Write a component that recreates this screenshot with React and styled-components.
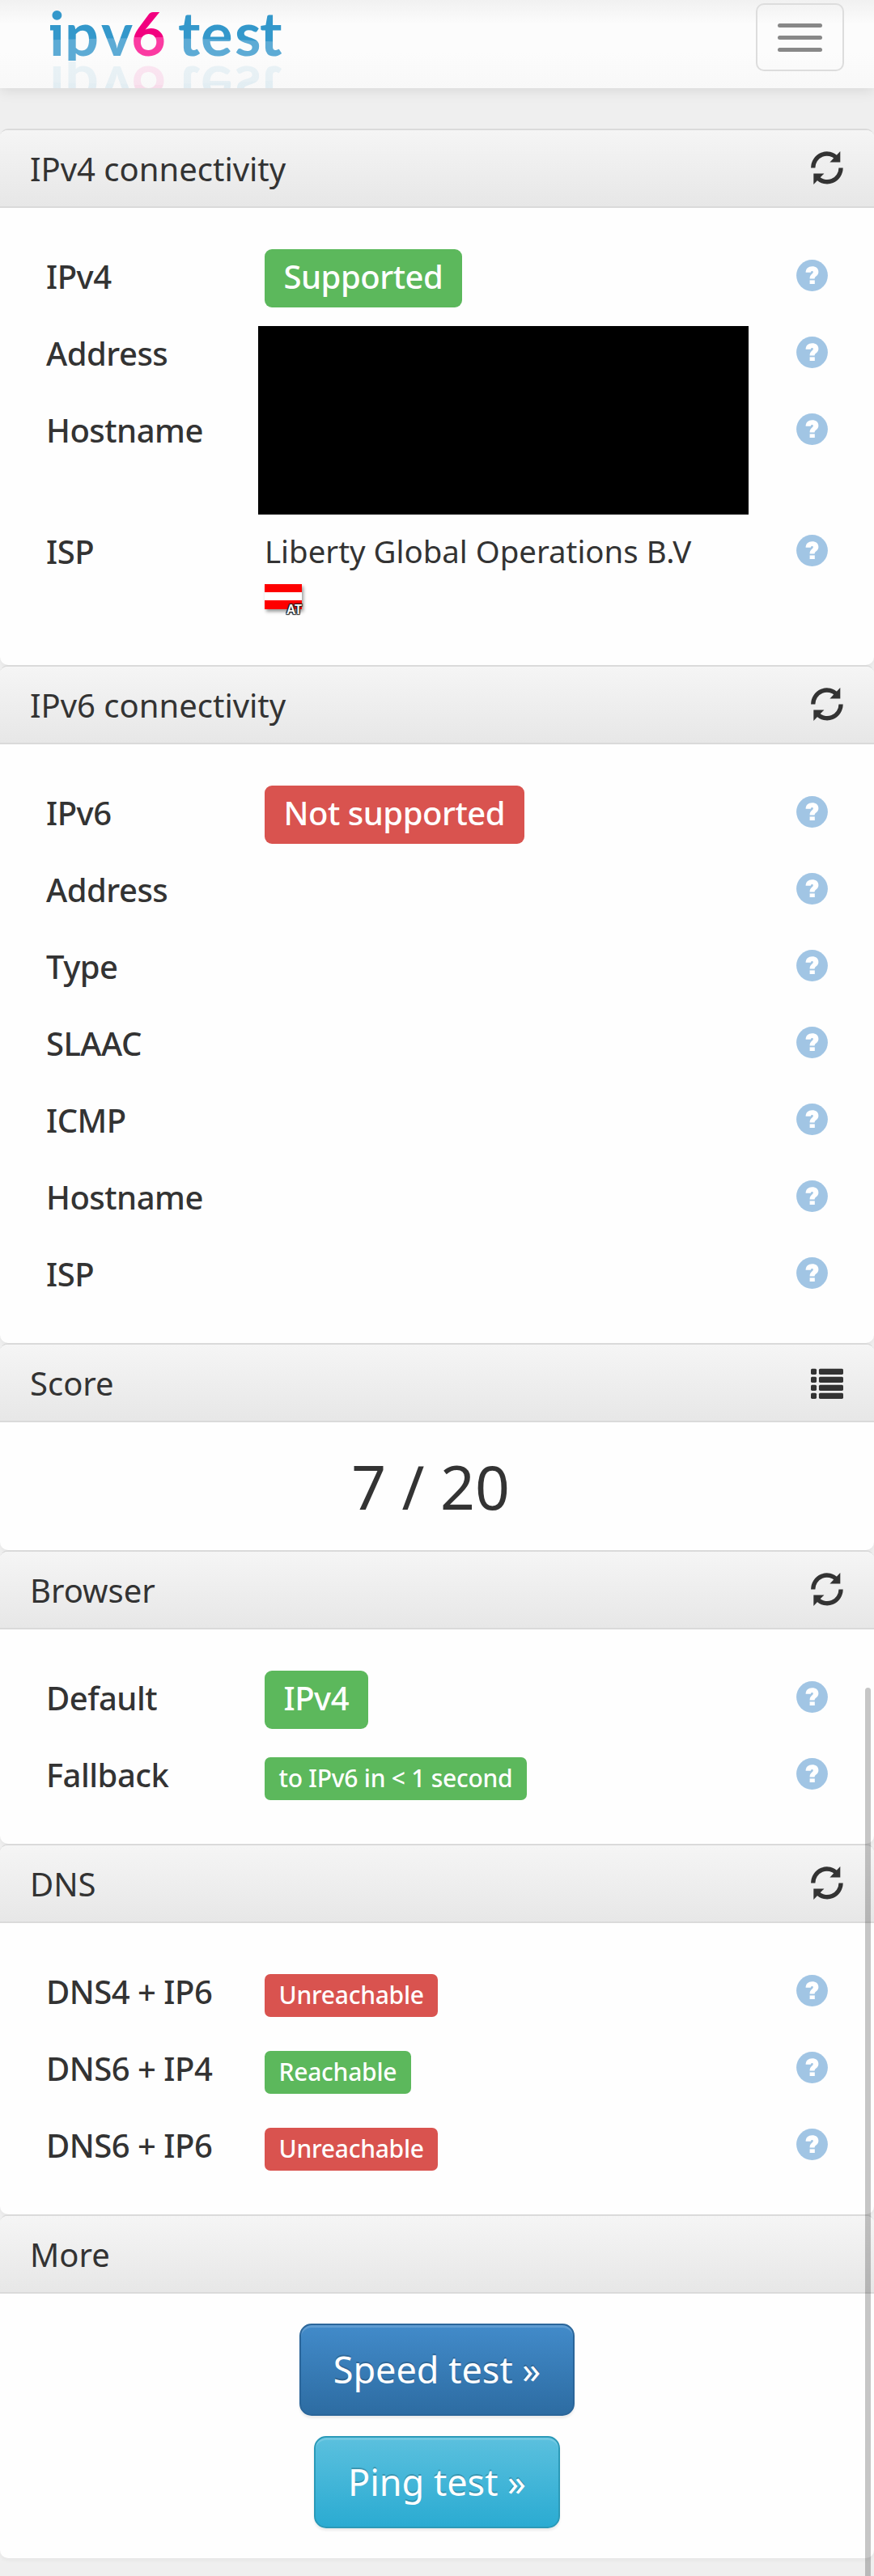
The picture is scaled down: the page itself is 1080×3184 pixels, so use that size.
import React from "react";
import styled, { createGlobalStyle } from "styled-components";

const GlobalStyle = createGlobalStyle`
  * { box-sizing: border-box; }
  body {
    margin: 0;
    background: #efefef;
    color: #333;
    font-family: "Noto Sans", "Open Sans", sans-serif;
    font-size: 40px;
    line-height: 57px;
  }
`;

const Page = styled.div`
  position: relative;
  width: 1080px;
  height: 3184px;
  overflow: hidden;
`;

const Navbar = styled.header`
  display: flex;
  justify-content: space-between;
  align-items: flex-start;
  height: 109px;
  margin-bottom: 50px;
  padding: 0 37px 0 60px;
  background: linear-gradient(#f1f1f1, #fcfcfc 30px, #fcfcfc 65px, #f8f8f8);
  box-shadow: 0 3px 16px rgba(0, 0, 0, 0.1);
  overflow: hidden;
`;

const Logo = styled.svg`
  display: block;
  overflow: visible;
  -webkit-box-reflect: below -67px linear-gradient(rgba(0, 0, 0, 0.11), rgba(0, 0, 0, 0.11));
`;

const LogoText = styled.text`
  font-family: Lato, sans-serif;
  font-weight: 700;
  font-size: 74px;
`;

const MenuButton = styled.button`
  display: flex;
  flex-direction: column;
  align-items: center;
  justify-content: center;
  gap: 10px;
  width: 109px;
  height: 84px;
  margin: 4px 0 0;
  padding: 0;
  border: 2px solid #ddd;
  border-radius: 10px;
  background: transparent;
`;

const MenuBar = styled.span`
  width: 55px;
  height: 5px;
  border-radius: 3px;
  background: #888;
`;

const Panel = styled.section`
  border-top: 2px solid #dadada;
  border-radius: 10px;
  background: #fefefe;
  box-shadow: 0 3px 5px rgba(0, 0, 0, 0.04);
  overflow: hidden;
`;

const PanelHeading = styled.h2`
  display: flex;
  justify-content: space-between;
  align-items: flex-start;
  height: 96px;
  margin: 0;
  padding: 19px 38px 0 37px;
  border-bottom: 2px solid #dadada;
  background: linear-gradient(#f5f5f5, #e7e7e7);
  font-size: 40px;
  font-weight: 400;
  line-height: 57px;
`;

const HeadingIcon = styled.svg`
  display: block;
  width: 40px;
  height: 41px;
  margin-top: 7px;
  fill: #333;
`;

const Rows = styled.div`
  padding: 36px 0 39px;
`;

const Masked = styled.div`
  position: relative;
`;

const Redaction = styled.div`
  position: absolute;
  left: 319px;
  top: 15px;
  width: 606px;
  height: 233px;
  background: #000;
`;

const Row = styled.div`
  display: grid;
  grid-template-columns: 270px 1fr 39px;
  align-items: start;
  height: ${(p) => (p.$tall ? 150 : 95)}px;
  padding: 0 57px 0 57px;
`;

const Label = styled.div`
  padding-top: 20px;
  font-weight: 500;
  letter-spacing: -0.5px;
  white-space: nowrap;
`;

const Value = styled.div`
  padding-top: ${(p) => p.$top}px;
  font-size: 38.4px;
  white-space: nowrap;
`;

const HelpIcon = styled.svg`
  display: block;
  width: 39px;
  height: 39px;
  margin-top: 28px;
`;

const Badge = styled.span`
  display: block;
  width: max-content;
  height: ${(p) => (p.$small ? 53 : 72)}px;
  padding: 0 ${(p) => (p.$small ? 17.5 : 23.5)}px;
  border-radius: ${(p) => (p.$small ? 7 : 9)}px;
  background: ${(p) => (p.$tone === "good" ? "#5cb85c" : "#d9534f")};
  color: #fff;
  font-size: ${(p) => (p.$small ? 30 : 40)}px;
  font-weight: 500;
  letter-spacing: ${(p) => (p.$small ? -0.25 : -0.48)}px;
  line-height: ${(p) => (p.$small ? 51 : 67)}px;
`;

const Flag = styled.div`
  display: flex;
  justify-content: flex-end;
  align-items: flex-end;
  width: 46px;
  height: 31px;
  margin-top: 12px;
  background: linear-gradient(#fe0000 10.5px, #fff 10.5px, #fff 20.5px, #fe0000 20.5px);
  box-shadow: 2px 3px 4px rgba(0, 0, 0, 0.4);
`;

const FlagCode = styled.span`
  margin: 0 0 -10px;
  color: #fff;
  font-size: 16px;
  font-weight: 600;
  line-height: 20px;
  text-shadow: -1px -1px 1px #222, 1px -1px 1px #222, -1px 1px 1px #222, 1px 1px 1px #222, 0 0 2px #222;
`;

const Score = styled.div`
  height: 158px;
  padding: 28px 16px 0 0;
  font-size: 75px;
  line-height: 102px;
  text-align: center;
`;

const Actions = styled.div`
  display: flex;
  flex-direction: column;
  align-items: center;
  gap: 25px;
  padding: 37px 0;
`;

const ActionButton = styled.button`
  height: 114px;
  padding: 0 40px;
  border: 2px solid ${(p) => (p.$primary ? "#2b669a" : "#2b9ab8")};
  border-radius: 15px;
  background: ${(p) =>
    p.$primary ? "linear-gradient(#428bca, #2d6ca2)" : "linear-gradient(#5bc0de, #2aabd2)"};
  box-shadow: inset 0 3px 0 rgba(255, 255, 255, 0.15), 0 3px 3px rgba(0, 0, 0, 0.075);
  color: #fff;
  font-family: inherit;
  font-size: 45px;
  line-height: 110px;
  text-shadow: 0 -2px 0 rgba(0, 0, 0, 0.2);
`;

const ScrollThumb = styled.div`
  position: absolute;
  top: 2086px;
  right: 4px;
  bottom: -10px;
  width: 7px;
  border-radius: 4px;
  background: rgba(0, 0, 0, 0.22);
`;

function SiteLogo() {
  return (
    <Logo width="300" height="109" viewBox="60 0 300 109" role="img" aria-label="ipv6 test">
      <defs>
        {/* Both fills stop at y = 75, which trims the descender of the "p". */}
        <pattern id="blue" patternUnits="userSpaceOnUse" width="400" height="200">
          <rect width="400" height="75" fill="#3498cb" />
          <path d="M0 52 Q200 41 400 55 V75 H0 Z" fill="#5dabd5" />
        </pattern>
        <pattern id="pink" patternUnits="userSpaceOnUse" width="400" height="200">
          <rect width="400" height="75" fill="#f2007f" />
          <path d="M0 46 H400 V75 H0 Z" fill="#fb3ba2" />
        </pattern>
      </defs>
      <rect x="62" y="31" width="8" height="6.5" fill="#3498cb" />
      <LogoText x="61 80 125 162" y="69" fill="url(#blue)">
        ipv<tspan fill="url(#pink)">6</tspan>
      </LogoText>
      <LogoText x="220 248 290 321" y="69" fill="url(#blue)">
        test
      </LogoText>
    </Logo>
  );
}

function RefreshIcon() {
  return (
    <HeadingIcon viewBox="0 0 41 41" preserveAspectRatio="none">
      <path d="M2.8 20.5 A17.4 17.4 0 0 1 33 8.6" fill="none" stroke="#333" strokeWidth="5.4" />
      <path d="M37.2 0 V13.6 H24 Z" />
      <path d="M38 20.5 A17.4 17.4 0 0 1 8 32.4" fill="none" stroke="#333" strokeWidth="5.4" />
      <path d="M3.4 41 V27.4 H16.8 Z" />
    </HeadingIcon>
  );
}

function ListIcon() {
  return (
    <HeadingIcon viewBox="0 0 41 41" preserveAspectRatio="none">
      {[3.7, 13.7, 23.7, 33.7].map((y) => (
        <g key={y}>
          <rect x="0" y={y} width="7.2" height="7.2" rx="1.6" />
          <rect x="10.2" y={y} width="30.8" height="7.2" rx="1.6" />
        </g>
      ))}
    </HeadingIcon>
  );
}

function Help() {
  return (
    <HelpIcon viewBox="0 0 39 39">
      <circle cx="19.5" cy="19.5" r="19.4" fill="#a1c5e4" />
      <path
        d="M11.6 15.8 C11.6 11 14.8 8.2 19.6 8.2 C24.4 8.2 27.4 10.8 27.4 15 C27.4 20.4 22.6 20 22.6 23.6 H16.6 C16.4 18 20.8 17.8 20.8 15.2 C20.8 13.6 18 13.6 17.8 15.8 Z"
        fill="#fff"
      />
      <rect x="16.6" y="25.4" width="6.2" height="4.6" fill="#fff" />
    </HelpIcon>
  );
}

function Heading({ title, icon }) {
  return (
    <PanelHeading>
      {title}
      {icon}
    </PanelHeading>
  );
}

function Field({ label, badge, tone, small, tall, children }) {
  return (
    <Row $tall={tall}>
      <Label>{label}</Label>
      <Value $top={badge ? (small ? 27 : 15) : 20}>
        {badge ? (
          <Badge $tone={tone} $small={small}>
            {badge}
          </Badge>
        ) : (
          children
        )}
      </Value>
      <Help />
    </Row>
  );
}

export default function App() {
  return (
    <Page>
      <GlobalStyle />
      <Navbar>
        <SiteLogo />
        <MenuButton aria-label="Menu">
          <MenuBar />
          <MenuBar />
          <MenuBar />
        </MenuButton>
      </Navbar>

      <Panel>
        <Heading title="IPv4 connectivity" icon={<RefreshIcon />} />
        <Rows>
          <Field label="IPv4" badge="Supported" tone="good" />
          <Masked>
            <Field label="Address" />
            <Field label="Hostname" tall />
            <Redaction />
          </Masked>
          <Field label="ISP" tall>
            Liberty Global Operations B.V
            <Flag>
              <FlagCode>AT</FlagCode>
            </Flag>
          </Field>
        </Rows>
      </Panel>

      <Panel>
        <Heading title="IPv6 connectivity" icon={<RefreshIcon />} />
        <Rows>
          <Field label="IPv6" badge="Not supported" tone="bad" />
          {["Address", "Type", "SLAAC", "ICMP", "Hostname", "ISP"].map((label) => (
            <Field key={label} label={label} />
          ))}
        </Rows>
      </Panel>

      <Panel>
        <Heading title="Score" icon={<ListIcon />} />
        <Score>7 / 20</Score>
      </Panel>

      <Panel>
        <Heading title="Browser" icon={<RefreshIcon />} />
        <Rows>
          <Field label="Default" badge="IPv4" tone="good" />
          <Field label="Fallback" badge="to IPv6 in < 1 second" tone="good" small />
        </Rows>
      </Panel>

      <Panel>
        <Heading title="DNS" icon={<RefreshIcon />} />
        <Rows>
          <Field label="DNS4 + IP6" badge="Unreachable" tone="bad" small />
          <Field label="DNS6 + IP4" badge="Reachable" tone="good" small />
          <Field label="DNS6 + IP6" badge="Unreachable" tone="bad" small />
        </Rows>
      </Panel>

      <Panel>
        <Heading title="More" />
        <Actions>
          <ActionButton $primary>Speed test »</ActionButton>
          <ActionButton>Ping test »</ActionButton>
        </Actions>
      </Panel>

      <ScrollThumb />
    </Page>
  );
}
